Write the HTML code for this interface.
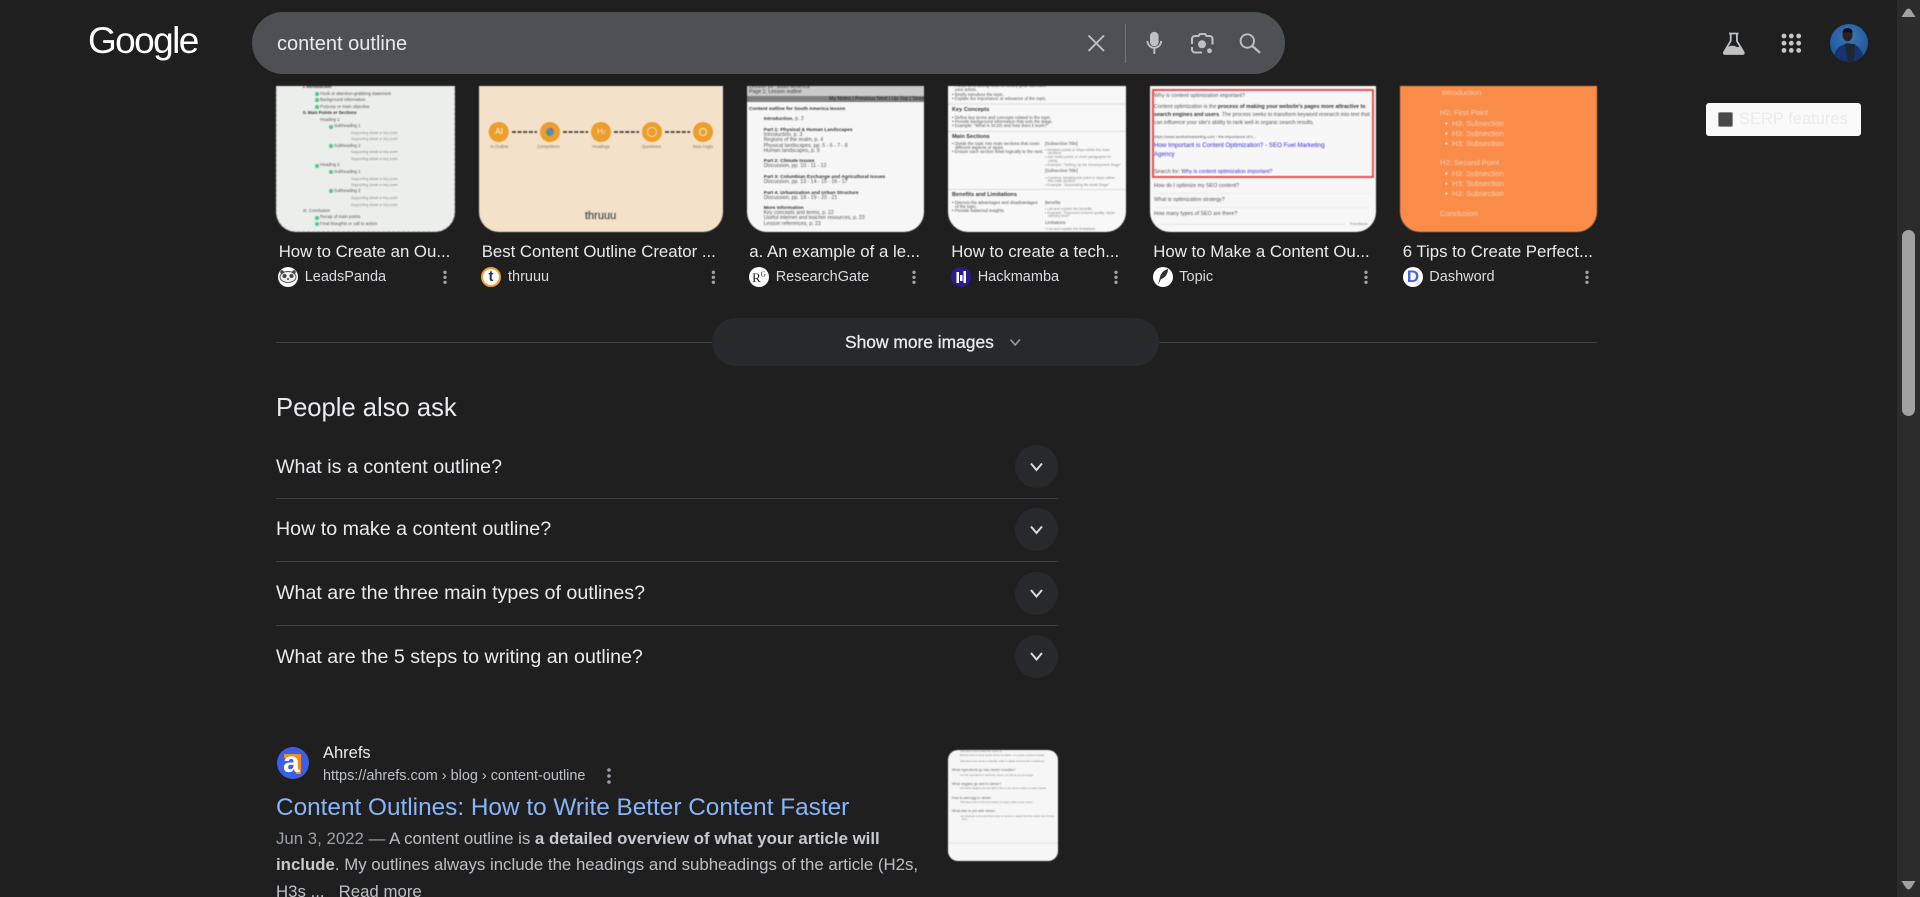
<!DOCTYPE html>
<html lang="en">
<head>
<meta charset="utf-8">
<title>content outline - Google Search</title>
<style>
*{box-sizing:border-box;margin:0;padding:0}
html,body{width:1920px;height:897px;overflow:hidden;background:#1f1f1f}
body{position:relative;font-family:"Liberation Sans",Arial,sans-serif;color:#e8eaed}
.a{position:absolute;white-space:nowrap}
.tile{position:absolute;top:86px;height:146px;border-radius:0 0 20px 20px;overflow:hidden;filter:blur(.45px)}
.tile i{position:absolute;font-style:normal;white-space:nowrap;line-height:6px;color:#555}
.tile i b{color:#333}
.d{width:3.5px;height:3.5px;border-radius:50%;background:#4fc98a}
.t{position:absolute;top:241px;height:22px;line-height:22px;font-size:16.8px;color:#e8eaed;white-space:nowrap}
.s{position:absolute;top:266px;height:22px;line-height:22px;font-size:14.5px;color:#dadce0;white-space:nowrap}
.f{position:absolute;top:267px;width:20px;height:20px;border-radius:50%;background:#fff;overflow:hidden;text-align:center}
.q{position:absolute;left:276px;height:26px;line-height:26px;font-size:19.65px;color:#e8eaed;white-space:nowrap}
.hr{position:absolute;left:276px;width:782px;height:1px;background:#3c4043}
.cc{position:absolute;left:1015px;width:43px;height:43px;border-radius:50%;background:#28292c}
.sn{position:absolute;left:276px;height:28px;line-height:28px;font-size:16.82px;color:#bdc1c6;white-space:nowrap}
.sn b{color:#c6c9ce}
.p3 b{font-size:4.9px}
.th i{font-size:2.6px;line-height:4px;color:#8a8a8a}
.th i.h{font-size:3.5px;line-height:6px;color:#6a6a6a}
</style>
</head>
<body>

<!-- Image tile 1 -->
<div class="tile" style="left:276px;width:179px;background:#eceeeb;border:1px dashed #c9cbc9;border-top:0;font-size:4.3px">
<i style="left:26px;top:-2px"><b>I. Introduction</b></i>
<i class="d" style="left:38px;top:6px"></i><i style="left:43px;top:5px">Hook or attention-grabbing statement</i>
<i class="d" style="left:38px;top:12px"></i><i style="left:43px;top:11px">Background information</i>
<i class="d" style="left:38px;top:19px"></i><i style="left:43px;top:18px">Purpose or main objective</i>
<i style="left:26px;top:24px"><b>II. Main Points or Sections</b></i>
<i style="left:43px;top:31px">Heading 1</i>
<i class="d" style="left:52px;top:39px"></i><i style="left:57px;top:37px">Subheading 1</i>
<i style="left:74px;top:44px;font-size:3.6px;color:#888">Supporting detail or key point</i>
<i style="left:74px;top:50px;font-size:3.6px;color:#888">Supporting detail or key point</i>
<i class="d" style="left:52px;top:58px"></i><i style="left:57px;top:57px">Subheading 2</i>
<i style="left:74px;top:63px;font-size:3.6px;color:#888">Supporting detail or key point</i>
<i style="left:74px;top:70px;font-size:3.6px;color:#888">Supporting detail or key point</i>
<i class="d" style="left:38px;top:78px"></i><i style="left:43px;top:76px">Heading 2</i>
<i class="d" style="left:52px;top:84px"></i><i style="left:57px;top:83px">Subheading 1</i>
<i style="left:74px;top:90px;font-size:3.6px;color:#888">Supporting detail or key point</i>
<i style="left:74px;top:96px;font-size:3.6px;color:#888">Supporting detail or key point</i>
<i class="d" style="left:52px;top:103px"></i><i style="left:57px;top:102px">Subheading 2</i>
<i style="left:74px;top:109px;font-size:3.6px;color:#888">Supporting detail or key point</i>
<i style="left:74px;top:116px;font-size:3.6px;color:#888">Supporting detail or key point</i>
<i style="left:26px;top:122px">III. Conclusion</i>
<i class="d" style="left:38px;top:130px"></i><i style="left:43px;top:128px">Recap of main points</i>
<i class="d" style="left:38px;top:136px"></i><i style="left:43px;top:135px">Final thoughts or call to action</i>
</div>

<!-- Image tile 2 -->
<div class="tile" style="left:479px;width:244px;background:#f3e1c9">
<svg width="244" height="146" style="position:absolute;left:0;top:0">
<g fill="#ec9d2b"><circle cx="19.7" cy="46" r="10"/><circle cx="71" cy="46" r="10"/><circle cx="122" cy="46" r="10"/><circle cx="173" cy="46" r="10"/><circle cx="224" cy="46" r="10"/></g>
<g stroke="#3a3a3a" stroke-width="1.8" stroke-dasharray="4 1.6"><path d="M33 46H58M84 46H109M135 46H160M186 46H211"/></g>
<circle cx="71" cy="46" r="4" fill="#4b8ae0"/><path d="M71 42a4 4 0 0 1 3.5 2H71z" fill="#dc4437"/><path d="M67.3 46a4 4 0 0 0 3.7 4v-4z" fill="#3ba757"/>
<circle cx="173" cy="46" r="4.6" fill="none" stroke="#f7dcb0" stroke-width="1"/>
<circle cx="224" cy="46" r="3.5" fill="none" stroke="#f7dcb0" stroke-width="1.4"/>
</svg>
<i style="left:16px;top:43px;color:#fbe6c6;font-size:8px;line-height:6px"><b style="color:#fbe6c6">AI</b></i>
<i style="left:118px;top:43px;color:#fbe6c6;font-size:8px">H<span style="font-size:5px">2</span></i>
<i style="left:11px;top:58px;font-size:4.2px;color:#777">AI Outline</i>
<i style="left:58px;top:58px;font-size:4.2px;color:#777">Competitors</i>
<i style="left:113px;top:58px;font-size:4.2px;color:#777">Headings</i>
<i style="left:163px;top:58px;font-size:4.2px;color:#777">Questions</i>
<i style="left:214px;top:58px;font-size:4.2px;color:#777">New Angle</i>
<i style="left:106px;top:127px;font-size:11px;color:#4a4a4a;-webkit-text-stroke:.2px #4a4a4a">thruuu</i>
</div>

<!-- Image tile 3 -->
<div class="tile p3" style="left:747px;width:177px;background:#f6f6f6;font-size:5.2px">
<div class="a" style="left:0;top:0;width:177px;height:10px;background:#c9c9c9"></div>
<div class="a" style="left:0;top:10px;width:177px;height:6px;background:#7f7f7f"></div>
<i style="left:2px;top:-2px;color:#444">Lesson 10: South America</i>
<i style="left:2px;top:3px;color:#444">Page 1: Lesson outline</i>
<i style="left:82px;top:10px;color:#222">My Notes | Previous Next | Up Top | Search</i>
<i style="left:2px;top:20px"><b>Content outline for South America lesson</b></i>
<i style="left:16.7px;top:30px"><b>Introduction</b>, p. 2</i>
<i style="left:16.7px;top:41px"><b>Part 1: Physical &amp; Human Landscapes</b></i>
<i style="left:16.7px;top:46px">Introduction, p. 3</i>
<i style="left:16.7px;top:51px">Regions of the realm, p. 4</i>
<i style="left:16.7px;top:57px">Physical landscapes, pp. 5 - 6 - 7 - 8</i>
<i style="left:16.7px;top:62px">Human landscapes, p. 9</i>
<i style="left:16.7px;top:72px"><b>Part 2: Climate Issues</b></i>
<i style="left:16.7px;top:77px">Discussion, pp. 10 - 11 - 12</i>
<i style="left:16.7px;top:88px"><b>Part 3: Columbian Exchange and Agricultural Issues</b></i>
<i style="left:16.7px;top:93px">Discussion, pp. 13 - 14 - 15 - 16 - 17</i>
<i style="left:16.7px;top:104px"><b>Part 4: Urbanization and Urban Structure</b></i>
<i style="left:16.7px;top:109px">Discussion, pp. 18 - 19 - 20 - 21</i>
<i style="left:16.7px;top:119px"><b>More Information</b></i>
<i style="left:16.7px;top:124px">Key concepts and terms, p. 22</i>
<i style="left:16.7px;top:129px">Useful internet and teacher resources, p. 23</i>
<i style="left:16.7px;top:135px">Lesson references, p. 23</i>
</div>

<!-- Image tile 4 -->
<div class="tile" style="left:948px;width:178px;background:#f8f8f8;font-size:4.3px">
<div class="a" style="left:0;top:17px;width:178px;height:2px;background:#e9e9e9"></div>
<div class="a" style="left:0;top:44.5px;width:178px;height:1px;background:#dcdcdc"></div>
<div class="a" style="left:0;top:102.5px;width:178px;height:1px;background:#dcdcdc"></div>
<i style="left:4px;top:-3px">• Focus on a strong hook to clearly grab attention.</i>
<i style="left:7px;top:1px">your article.</i>
<i style="left:4px;top:6px">• Briefly introduce the topic.</i>
<i style="left:4px;top:10px">• Explain the importance or relevance of the topic.</i>
<i style="left:4px;top:21px;font-size:5.6px"><b>Key Concepts</b></i>
<i style="left:4px;top:29px">• Define key terms and concepts related to the topic.</i>
<i style="left:4px;top:33px">• Provide background information that sets the stage.</i>
<i style="left:4px;top:37px">• Example: "What is SCSS and how does it work?"</i>
<i style="left:4px;top:48px;font-size:5.6px"><b>Main Sections</b></i>
<i style="left:4px;top:55px">• Divide the topic into main sections that cover</i>
<i style="left:7px;top:59px">different aspects or steps.</i>
<i style="left:4px;top:63px">• Ensure each section flows logically to the next.</i>
<i style="left:97px;top:55px">[Subsection Title]</i>
<i style="left:97px;top:61px;font-size:3.6px;color:#888">• Detailed points or steps within the main</i>
<i style="left:100px;top:64px;font-size:3.6px;color:#888">sections</i>
<i style="left:97px;top:68px;font-size:3.6px;color:#888">• Use bullet points or short paragraphs for</i>
<i style="left:100px;top:72px;font-size:3.6px;color:#888">clarity</i>
<i style="left:97px;top:76px;font-size:3.6px;color:#888">• Example: "Setting Up the Development Stage"</i>
<i style="left:97px;top:82px">[Subsection Title]</i>
<i style="left:97px;top:89px;font-size:3.6px;color:#888">• Continue detailing the point or steps within</i>
<i style="left:100px;top:92px;font-size:3.6px;color:#888">this main section.</i>
<i style="left:97px;top:96px;font-size:3.6px;color:#888">• Example: "Automating the Build Stage"</i>
<i style="left:4px;top:106px;font-size:5.6px"><b>Benefits and Limitations</b></i>
<i style="left:4px;top:114px">• Discuss the advantages and disadvantages</i>
<i style="left:7px;top:118px">of the topic.</i>
<i style="left:4px;top:122px">• Provide balanced insights.</i>
<i style="left:97px;top:114px">Benefits</i>
<i style="left:97px;top:120px;font-size:3.6px;color:#888">• List and explain the benefits.</i>
<i style="left:97px;top:124px;font-size:3.6px;color:#888">• Example: "Improved scheme quality, faster</i>
<i style="left:100px;top:127px;font-size:3.6px;color:#888">delivery time"</i>
<i style="left:97px;top:134px">Limitations</i>
<i style="left:97px;top:140px;font-size:3.6px;color:#888">• List and explain the limitations</i>
</div>

<!-- Image tile 5 -->
<div class="tile" style="left:1150px;width:226px;background:#f7f7f7;font-size:5.3px">
<div class="a" style="left:1.7px;top:3px;width:222px;height:89px;border:2px solid #ea4f4f"></div>
<i style="left:4px;top:7px">Why is content optimization important?</i>
<i style="left:4px;top:18px">Content optimization is the <b>process of making your website's pages more attractive to</b></i>
<i style="left:4px;top:26px"><b>search engines and users</b>. The process seeks to transform keyword research into text that</i>
<i style="left:4px;top:34px">can influence your site's ability to rank well in organic search results.</i>
<i style="left:4px;top:48px;font-size:4px">https://www.seofuelmarketing.com › the-importance-of-c...</i>
<i style="left:4px;top:57px;color:#3434cc;font-size:6.2px">How Important is Content Optimization? - SEO Fuel Marketing</i>
<i style="left:4px;top:66px;color:#3434cc;font-size:6.2px">Agency</i>
<i style="left:4px;top:83px">Search for: <span style="color:#3434cc">Why is content optimization important?</span></i>
<i style="left:4px;top:97px">How do I optimize my SEO content?</i>
<i style="left:4px;top:111px">What is optimization strategy?</i>
<i style="left:4px;top:125px">How many types of SEO are there?</i>
<i style="left:200px;top:135px;font-size:4px;color:#888">Feedback</i>
<div class="a" style="left:4px;top:107px;width:216px;height:1px;background:#ececec"></div>
<div class="a" style="left:4px;top:121px;width:216px;height:1px;background:#ececec"></div>
<div class="a" style="left:4px;top:138px;width:192px;height:1px;background:#e4e4e4"></div>
</div>

<!-- Image tile 6 -->
<div class="tile" style="left:1400px;width:197px;background:#fa8c4a;font-size:7.6px">
<i style="left:41.7px;top:4px;color:#fdd0b0">Introduction</i>
<i style="left:40px;top:24px;color:#fdd0b0">H2: First Point</i>
<i style="left:45px;top:35px;color:#fff">•</i><i style="left:52.3px;top:35px;color:#fdd0b0">H3: Subsection</i>
<i style="left:45px;top:45px;color:#fff">•</i><i style="left:52.3px;top:45px;color:#fdd0b0">H3: Subsection</i>
<i style="left:45px;top:55px;color:#fff">•</i><i style="left:52.3px;top:55px;color:#fdd0b0">H3: Subsection</i>
<i style="left:40px;top:74px;color:#fdd0b0">H2: Second Point</i>
<i style="left:45px;top:85px;color:#fff">•</i><i style="left:52.3px;top:85px;color:#fdd0b0">H3: Subsection</i>
<i style="left:45px;top:95px;color:#fff">•</i><i style="left:52.3px;top:95px;color:#fdd0b0">H3: Subsection</i>
<i style="left:45px;top:105px;color:#fff">•</i><i style="left:52.3px;top:105px;color:#fdd0b0">H3: Subsection</i>
<i style="left:40px;top:125px;color:#fdd0b0">Conclusion</i>
</div>

<!-- Tile captions -->
<div class="t" style="left:278.7px">How to Create an Ou...</div>
<div class="t" style="left:481.7px">Best Content Outline Creator ...</div>
<div class="t" style="left:749.3px">a. An example of a le...</div>
<div class="t" style="left:951.3px">How to create a tech...</div>
<div class="t" style="left:1153.3px">How to Make a Content Ou...</div>
<div class="t" style="left:1402.7px">6 Tips to Create Perfect...</div>

<div class="f" style="left:278px">
<svg width="20" height="20"><ellipse cx="10" cy="10" rx="8" ry="5.5" fill="#eee" stroke="#555"/><circle cx="6.5" cy="9" r="2" fill="#444"/><circle cx="13.5" cy="9" r="2" fill="#444"/><circle cx="4" cy="5" r="1.8" fill="#444"/><circle cx="16" cy="5" r="1.8" fill="#444"/><circle cx="10" cy="12" r="1" fill="#444"/></svg>
</div>
<div class="f" style="left:481px;border:2px solid #f0a030;font:bold 15px/16px 'Liberation Sans',sans-serif;color:#22384f">t</div>
<div class="f" style="left:749px;font:13px/21px 'Liberation Serif',serif;color:#222">R<sup style="font-size:7px;line-height:0">G</sup></div>
<div class="f" style="left:951px;background:#2e1a8e">
<svg width="20" height="20"><path d="M5.5 5v11h2.5V5zM9 8v6h2.5V8zM12.5 4v12H15V4z" fill="#fff"/></svg>
</div>
<div class="f" style="left:1153px">
<svg width="20" height="20"><path d="M15 2c-4 1-7 4-8 8l-2 8 3-6c4-1 7-5 7-10z" fill="#2a3440"/></svg>
</div>
<div class="f" style="left:1403px;font:bold 17px/20px 'Liberation Sans',sans-serif;color:#4f63d9">D</div>

<div class="s" style="left:304.7px">LeadsPanda</div>
<div class="s" style="left:508px">thruuu</div>
<div class="s" style="left:775.7px">ResearchGate</div>
<div class="s" style="left:977.7px">Hackmamba</div>
<div class="s" style="left:1179.3px">Topic</div>
<div class="s" style="left:1429.3px">Dashword</div>

<!-- Show more -->
<div class="a" style="left:276px;top:342px;width:1321px;height:1px;background:#3c4043"></div>
<div class="a" style="left:712px;top:318px;width:447px;height:48px;border-radius:24px;background:#28292c"></div>
<div class="a" style="left:845px;top:330px;height:24px;line-height:24px;font-size:17.4px;color:#e8eaed;-webkit-text-stroke:.3px #e8eaed">Show more images</div>

<!-- PAA -->
<div class="a" style="left:276px;top:391px;height:34px;line-height:34px;font-size:25.6px;color:#e8eaed">People also ask</div>
<div class="q" style="top:454px">What is a content outline?</div>
<div class="q" style="top:516px">How to make a content outline?</div>
<div class="q" style="top:580px">What are the three main types of outlines?</div>
<div class="q" style="top:644px">What are the 5 steps to writing an outline?</div>
<div class="hr" style="top:498px"></div>
<div class="hr" style="top:561px"></div>
<div class="hr" style="top:625px"></div>
<div class="cc" style="top:445px"></div>
<div class="cc" style="top:508px"></div>
<div class="cc" style="top:572px"></div>
<div class="cc" style="top:635px"></div>

<!-- Result -->
<div class="a" style="left:277px;top:747px;width:32px;height:32px;border-radius:50%;background:#3d5fe6;overflow:hidden">
<div class="a" style="left:7px;top:7px;width:16px;height:4px;background:#f08a24"></div>
<div class="a" style="left:19px;top:7px;width:5px;height:20px;background:#f08a24"></div>
<div class="a" style="left:6px;top:-1px;font:bold 30px/34px 'Liberation Sans',sans-serif;color:#fff">a</div>
</div>
<div class="a" style="left:323px;top:742px;height:22px;line-height:22px;font-size:16.5px;color:#e8eaed">Ahrefs</div>
<div class="a" style="left:323px;top:765px;height:22px;line-height:22px;font-size:14.45px;color:#bdc1c6">https://ahrefs.com › blog › content-outline</div>
<div class="a" style="left:276px;top:792px;height:32px;line-height:32px;font-size:24.35px;color:#8ab4f8">Content Outlines: How to Write Better Content Faster</div>
<div class="sn" style="top:825px"><span style="color:#9aa0a6">Jun 3, 2022 — </span>A content outline is <b>a detailed overview of what your article will</b></div>
<div class="sn" style="top:851px"><b>include</b>. My outlines always include the headings and subheadings of the article (H2s,</div>
<div class="sn" style="top:878px">H3s ...&nbsp;&nbsp; Read more</div>

<!-- Result thumb -->
<div class="tile th" style="left:948px;top:750px;width:110px;height:111px;border-radius:10px;background:#f6f6f6">
<i style="left:12px;top:0">Talk about how to keep the ramen in</i>
<i style="left:12px;top:4px">Mention how to ramp up the ramen by steam, or a pasta machine instead</i>
<i style="left:12px;top:10px">Talk about how ramen is actually made in Japan and how this is authentic</i>
<i class="h" style="left:3.7px;top:17px">What ingredients go into ramen noodles?</i>
<i style="left:12px;top:24px">List the ingredients in authentic ramen, as well as any beverage</i>
<i class="h" style="left:3.7px;top:31px">What veggies go well in ramen?</i>
<i style="left:12px;top:37px">List some veggies you can add to this or any ramen recipe to make it better</i>
<i class="h" style="left:3.7px;top:45px">How to add egg to ramen</i>
<i style="left:12px;top:51px">Talk about how to find and season an egg to add to your ramen</i>
<i class="h" style="left:3.7px;top:58px">What else to put with ramen</i>
<i style="left:12px;top:65px">List toppings commonly found atop on ramen in Japan that this reader can choose</i>
<i style="left:14px;top:68px">from</i>
<div class="a" style="left:0;top:92px;width:110px;height:2px;background:#ececec"></div>
</div>

<!-- Header -->
<div class="a" style="left:88px;top:17px;height:48px;line-height:48px;font-size:37px;color:#fff;letter-spacing:-1.6px">Google</div>
<div class="a" style="left:252px;top:12px;width:1033px;height:62px;border-radius:31px;background:#4d5156"></div>
<div class="a" style="left:277px;top:31px;height:26px;line-height:26px;font-size:20px;color:#e8eaed">content outline</div>

<!-- SERP box -->
<div class="a" style="left:1706px;top:103px;width:155px;height:33px;border-radius:3px;background:#fafafa"></div>
<div class="a" style="left:1718px;top:112px;width:15px;height:15px;border-radius:2px;background:#484848;border:1px solid #8a8a8a"></div>
<div class="a" style="left:1739px;top:108px;height:22px;line-height:22px;font-size:16.5px;color:#ececec">SERP features</div>

<!-- Scrollbar -->
<div class="a" style="left:1897px;top:0;width:23px;height:897px;background:#2c2c2c"></div>
<div class="a" style="left:1902px;top:230px;width:13px;height:186px;border-radius:6.5px;background:#a1a1a1"></div>

<!-- Icons -->
<svg class="a" style="left:0;top:0" width="1920" height="897" viewBox="0 0 1920 897">
<defs><clipPath id="av"><circle cx="1849" cy="43" r="19"/></clipPath>
<radialGradient id="avg" cx="50%" cy="35%" r="70%"><stop offset="0" stop-color="#3c78bd"/><stop offset="1" stop-color="#1d4f92"/></radialGradient></defs>
<!-- search bar icons -->
<g fill="none" stroke="#bdc1c6" stroke-width="1.9">
<path d="M1088.5 35.5L1104 51M1104 35.5L1088.5 51"/>
<path d="M1147.5 41a6.8 6.8 0 0 0 13.6 0M1154.3 48v6"/>
<path d="M1192 44v-5a3 3 0 0 1 3-3h3.5l1.5-2h5l1.5 2h3a3 3 0 0 1 3 3v5.5" stroke-width="2.1"/>
<path d="M1192 47v2.5a3 3 0 0 0 3 3h7" stroke-width="2.1"/>
<circle cx="1247.3" cy="41" r="6.7"/>
<path d="M1252.3 46L1260 52.8" stroke-width="2.2"/>
</g>
<rect x="1125" y="24" width="1" height="39" fill="#70757a"/>
<rect x="1150" y="31.7" width="8.6" height="14.6" rx="4.3" fill="#bdc1c6"/>
<circle cx="1202" cy="44.3" r="4" fill="#bdc1c6"/>
<circle cx="1209.5" cy="50.8" r="2.4" fill="#bdc1c6"/>
<!-- right icons -->
<path d="M1729 33.5h9.5M1730.7 33.5v7.5l-6.6 11q-1 2 1.2 2h17q2.2 0 1.2-2l-6.6-11v-7.5" fill="none" stroke="#bdc1c6" stroke-width="1.8"/>
<path d="M1727.5 47q5-2.5 8 -.6t5 -1.2l3.6 7.4q.6 1.4-1.2 1.4h-18q-1.8 0-1.2-1.4z" fill="#bdc1c6"/>
<g fill="#c4c7c9">
<circle cx="1784" cy="36" r="2.4"/><circle cx="1791.3" cy="36" r="2.4"/><circle cx="1798.7" cy="36" r="2.4"/>
<circle cx="1784" cy="43.2" r="2.4"/><circle cx="1791.3" cy="43.2" r="2.4"/><circle cx="1798.7" cy="43.2" r="2.4"/>
<circle cx="1784" cy="50.4" r="2.4"/><circle cx="1791.3" cy="50.4" r="2.4"/><circle cx="1798.7" cy="50.4" r="2.4"/>
</g>
<g clip-path="url(#av)">
<rect x="1830" y="24" width="38" height="38" fill="url(#avg)"/>
<path d="M1833 62q1-14 10-17l4 -2 6 1q10 3 11 18z" fill="#17336f"/>
<path d="M1845 44l3 18h6l1-18z" fill="#1f2830"/>
<ellipse cx="1847.5" cy="35" rx="5" ry="6.4" fill="#2c2019"/>
<path d="M1842.5 33q0-5 5-5t5 5q-5-2-10 0z" fill="#0e0e12"/>
</g>
<!-- kebabs -->
<g fill="#9aa0a6">
<circle cx="445" cy="272.3" r="1.7"/><circle cx="445" cy="277.3" r="1.7"/><circle cx="445" cy="282.3" r="1.7"/>
<circle cx="713.4" cy="272.3" r="1.7"/><circle cx="713.4" cy="277.3" r="1.7"/><circle cx="713.4" cy="282.3" r="1.7"/>
<circle cx="914" cy="272.3" r="1.7"/><circle cx="914" cy="277.3" r="1.7"/><circle cx="914" cy="282.3" r="1.7"/>
<circle cx="1116" cy="272.3" r="1.7"/><circle cx="1116" cy="277.3" r="1.7"/><circle cx="1116" cy="282.3" r="1.7"/>
<circle cx="1366" cy="272.3" r="1.7"/><circle cx="1366" cy="277.3" r="1.7"/><circle cx="1366" cy="282.3" r="1.7"/>
<circle cx="1587" cy="272.3" r="1.7"/><circle cx="1587" cy="277.3" r="1.7"/><circle cx="1587" cy="282.3" r="1.7"/>
<circle cx="609" cy="770" r="1.8"/><circle cx="609" cy="776" r="1.8"/><circle cx="609" cy="782" r="1.8"/>
</g>
<!-- chevrons -->
<path d="M1010.5 339.5l4.7 5.5 4.7-5.5" fill="none" stroke="#9aa0a6" stroke-width="1.5"/>
<g fill="none" stroke="#dadce0" stroke-width="2">
<path d="M1031 463.5l5.5 6.5 5.5-6.5"/>
<path d="M1031 526.5l5.5 6.5 5.5-6.5"/>
<path d="M1031 590l5.5 6.5 5.5-6.5"/>
<path d="M1031 653l5.5 6.5 5.5-6.5"/>
</g>
<!-- scroll arrows -->
<path d="M1901.5 17l4.5-7q2.5-3 5 0l4.5 7z" fill="#a1a1a1"/>
<path d="M1901.5 881l4.5 7q2.5 3 5 0l4.5-7z" fill="#a1a1a1"/>
</svg>
</body>
</html>
